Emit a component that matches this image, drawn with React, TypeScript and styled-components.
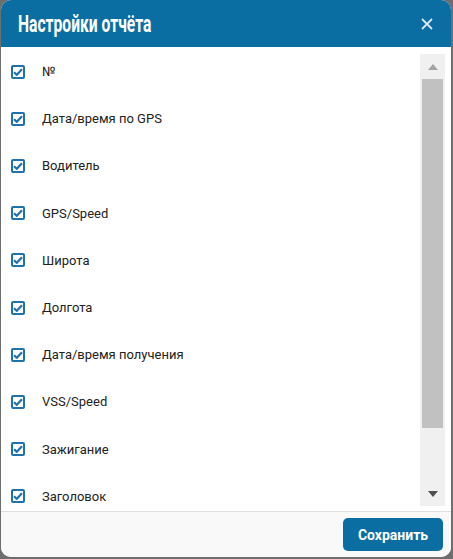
import styled, { createGlobalStyle } from 'styled-components';

const GlobalStyle = createGlobalStyle`
  html, body {
    margin: 0;
    padding: 0;
    background: #6e6e6e;
    font-family: Roboto, 'Liberation Sans', sans-serif;
  }
`;

const Modal = styled.div`
  width: 450px;
  height: 557px;
  margin: 0 2px 0 1px;
  background: #fff;
  border-radius: 10px;
  overflow: hidden;
  display: flex;
  flex-direction: column;
`;

const Header = styled.header`
  height: 47px;
  flex: none;
  background: #0a6ea3;
  display: flex;
  align-items: center;
  justify-content: space-between;
  padding: 0 18px 0 17px;
`;

// condensed display face isn't installed, so narrow Roboto bold
const Title = styled.h2`
  margin: 0;
  color: #fff;
  font-family: Roboto, 'Liberation Sans', sans-serif;
  font-weight: 700;
  font-size: 23px;
  padding-top: 1px;
  transform: scaleX(0.68);
  transform-origin: left center;
  white-space: nowrap;
`;

const CloseButton = styled.button`
  border: 0;
  background: none;
  padding: 0;
  width: 12px;
  height: 12px;
  display: flex;
  cursor: pointer;
`;

const Body = styled.div`
  flex: 1;
  min-height: 0;
  display: flex;
`;

const List = styled.ul`
  flex: 1;
  margin: 0;
  padding: 1px 0 0;
  list-style: none;
  overflow: hidden;
`;

const Row = styled.li`
  height: 47.2px;
  display: flex;
  align-items: center;
  gap: 17px;
  padding-left: 10px;
  font-size: 13px;
  color: #222;
`;

const Box = styled.span`
  width: 14px;
  height: 14px;
  box-sizing: border-box;
  border: 2px solid #1f72ad;
  border-radius: 2px;
  background: #fff;
  display: flex;
  align-items: center;
  justify-content: center;
  flex: none;
`;

const Scrollbar = styled.div`
  width: 25px;
  flex: none;
  margin: 7px 6px 5px 0;
  background: #f0f0f0;
  display: flex;
  flex-direction: column;
`;

const Arrow = styled.div`
  height: 25px;
  flex: none;
  display: flex;
  align-items: center;
  justify-content: center;
`;

const Thumb = styled.div`
  margin: 0 2px;
  height: 349px;
  background: #c1c1c1;
`;

const Track = styled.div`
  flex: 1;
`;

const Footer = styled.footer`
  height: 45px;
  flex: none;
  border-top: 1px solid #dedede;
  background: #f9f9f9;
  display: flex;
  align-items: center;
  justify-content: flex-end;
  padding-right: 8px;
`;

const SaveButton = styled.button`
  width: 100px;
  height: 33px;
  border: 0;
  border-radius: 5px;
  background: #0a6ea3;
  color: #fff;
  font-family: Roboto, 'Liberation Sans', sans-serif;
  font-weight: 700;
  font-size: 14px;
  cursor: pointer;
`;

const fields = [
  '№',
  'Дата/время по GPS',
  'Водитель',
  'GPS/Speed',
  'Широта',
  'Долгота',
  'Дата/время получения',
  'VSS/Speed',
  'Зажигание',
  'Заголовок',
];

const Check = () => (
  <Box>
    <svg width="10" height="8" viewBox="0 0 10 8">
      <path d="M1 4.2 L3.8 6.8 L9 1.2" fill="none" stroke="#1f72ad" strokeWidth="2.2" />
    </svg>
  </Box>
);

const App = () => (
  <>
    <GlobalStyle />
    <Modal>
      <Header>
        <Title>Настройки отчёта</Title>
        <CloseButton aria-label="Закрыть">
          <svg width="12" height="12" viewBox="0 0 12 12">
            <path d="M1 1 L11 11 M11 1 L1 11" stroke="#dbe8f1" strokeWidth="1.8" />
          </svg>
        </CloseButton>
      </Header>
      <Body>
        <List>
          {fields.map((f) => (
            <Row key={f}>
              <Check />
              {f}
            </Row>
          ))}
        </List>
        <Scrollbar>
          <Arrow>
            <svg width="10" height="6" viewBox="0 0 10 6">
              <path d="M0 6 L5 0 L10 6 Z" fill="#a3a3a3" />
            </svg>
          </Arrow>
          <Thumb />
          <Track />
          <Arrow>
            <svg width="10" height="6" viewBox="0 0 10 6">
              <path d="M0 0 L10 0 L5 6 Z" fill="#505050" />
            </svg>
          </Arrow>
        </Scrollbar>
      </Body>
      <Footer>
        <SaveButton>Сохранить</SaveButton>
      </Footer>
    </Modal>
  </>
);

export default App;
